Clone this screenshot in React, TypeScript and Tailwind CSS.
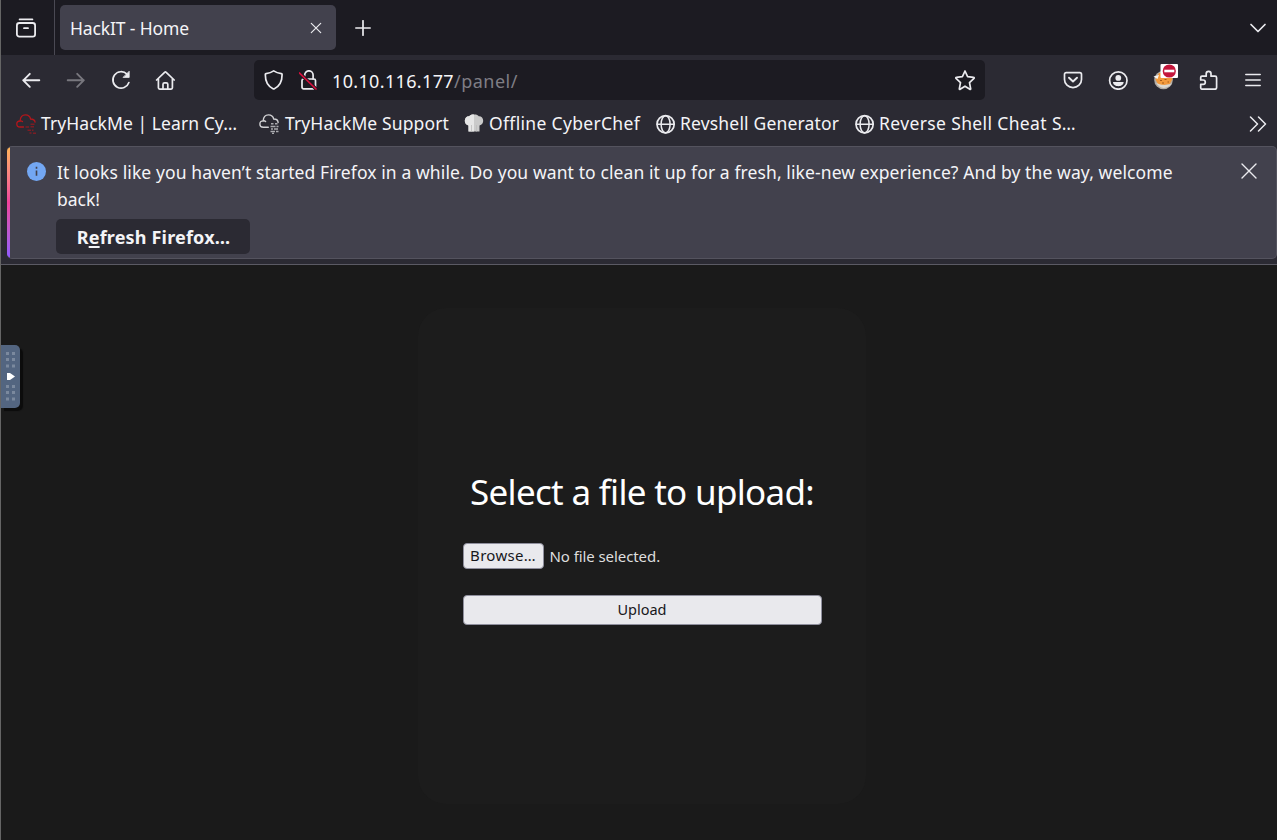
import type { ReactNode } from 'react';

const ink = '#ebebef';

function Icon({ className, children, box = '0 0 20 20' }: { className: string; children: ReactNode; box?: string }) {
  return (
    <svg viewBox={box} fill="none" stroke={ink} strokeWidth="1.5" strokeLinecap="round" strokeLinejoin="round" className={`block shrink-0 ${className}`}>
      {children}
    </svg>
  );
}

function Globe() {
  return (
    <Icon className="mr-1 size-5">
      <circle cx="9.600" cy="10.300" r="8.600" strokeWidth="1.700" />
      <ellipse cx="9.600" cy="10.300" rx="4.500" ry="8.600" strokeWidth="1.500" />
      <path d="M1.200 10.300H18" strokeWidth="1.500" />
    </Icon>
  );
}

function RedCloud() {
  return (
    <Icon className="mr-[5px] size-5">
      <g stroke="#b3161b" strokeWidth="1.300">
        <path d="M7.500 13H4C2 13 .8 11.700.8 10c0-1.800 1.400-3 3.300-3C4.300 3.500 6.300.9 9.500.9c2.800 0 4.500 1.600 5.100 4.100 2.500 0 4.200 1.300 4.500 3.200" />
        <path d="M4.100 7c.9-.2 1.700 0 2.400.6" />
      </g>
      <g stroke="#b3161b" strokeWidth="1.400" strokeLinecap="butt" opacity=".6">
        <path d="M14.500 10.300h4M9.500 13h3.500M14.500 12.800H18M11.500 16.200h3.500M16 16.200h1.500M13.500 19h2M17 19.200h3" />
      </g>
    </Icon>
  );
}

function GrayCloud() {
  return (
    <Icon className="mr-[6px] -ml-px size-5">
      <path d="M9.300 13.200H4.300C2.200 13.200.9 11.800.9 10c0-1.800 1.400-3.100 3.300-3.100C4.400 3.300 6.500.9 9.500.9c2.800 0 4.600 1.600 5.200 4.100 2.500 0 4.400 1.400 4.400 3.600" stroke="#d2d2d5" strokeWidth="1.400" />
      <path d="M4.200 6.900c.9-.2 1.700 0 2.400.6" stroke="#d2d2d5" strokeWidth="1.400" />
      <g stroke="#aaaaaf" strokeWidth="1.500" strokeLinecap="butt">
        <path d="M12 9.800h2.500M16 9.800h2.500M11.500 12.400h5M17.500 12.400H19.500M12 15h2M15 15h4M11.500 17.400h4.500M17 17.600h2.500M13 19.400h2" />
      </g>
    </Icon>
  );
}

function ChefHat() {
  return (
    <svg viewBox="0 0 20 20" className="mr-[5px] -ml-px block size-5 shrink-0">
      <path d="M4.500 17.500V11.500C2 11 .8 9 .8 6.800.8 4 2.800 2 5.200 2.200 6.300.8 8 .3 10 .5c2-.2 3.700.3 4.800 1.700 2.500-.2 4.400 1.800 4.400 4.600 0 2.200-1.200 4.200-3.700 4.700v6Z" fill="#cacaca" />
      <path d="M4.500 17.500V11.500C2 11 .8 9 .8 6.800.8 4 2.800 2 5.200 2.200 6.300.8 8 .3 10 .5V17.500Z" fill="#e6e6e6" />
      <path d="M7.500 17.500V11M12.500 17.500V11" stroke="#bdbdbd" strokeWidth=".8" />
    </svg>
  );
}

function CookieBadge() {
  return (
    <svg viewBox="0 0 26 26" className="block h-[26px] w-[26px] shrink-0">
      <circle cx="10.500" cy="16" r="9.300" fill="#b3ada6" />
      <path d="M2.500 15.500 6 9l12 0 1.500 6-3 5.500-11 1Z" fill="#f39a3c" />
      <path d="M3 18.500c3 2.500 10 3.500 15.500 1-3.500 6-12.500 6-15.500-1Z" fill="#dcd8d0" />
      <path d="m.5 12.500 5.500-1.500-1.500 4Z" fill="#f6f6f6" />
      <path d="M7 16.500h2M11.500 15.500h2M9 19h2M14.500 18H16" stroke="#a65a17" strokeWidth="1.200" />
      <rect x="7.500" y="0" width="17.500" height="14" rx="1" fill="#fff" />
      <circle cx="16.300" cy="7" r="6.600" fill="#c4163c" />
      <path d="M11.300 7h10" stroke="#fff" strokeWidth="2.600" />
    </svg>
  );
}

function Tabs() {
  return (
    <div className="flex h-[55px] shrink-0 items-center bg-[#1c1b22]">
      <div className="flex h-full w-[54px] items-center border-r border-[#4a4953] pl-[15px]">
        <Icon className="size-5">
          <rect x=".9" y="5" width="18.200" height="13.600" rx="2.400" strokeWidth="1.800" />
          <path d="M3.600 1.400h12.800" strokeWidth="1.800" />
          <path d="M8 10.200h4" strokeWidth="1.800" />
        </Icon>
      </div>
      <div className="ml-[5px] flex h-[45px] w-[276px] items-center justify-between rounded-[5px] bg-[#42414d] pr-[14px] pl-[10px]">
        <span className="pt-[2px] text-[17.5px] tracking-[-0.13px]">HackIT - Home</span>
        <Icon className="size-3" box="0 0 12 12"><path d="m1.300 1.300 9.400 9.400M10.700 1.300 1.300 10.700" strokeWidth="1.200" /></Icon>
      </div>
      <Icon className="ml-[19px] size-4" box="0 0 16 16"><path d="M8 .8v14.400M.8 8h14.400" strokeWidth="1.700" /></Icon>
      <Icon className="mr-[10px] ml-auto h-[10px] w-[18px]" box="0 0 18 10"><path d="m2 1.500 7 7 7-7" strokeWidth="1.700" /></Icon>
    </div>
  );
}

function Toolbar() {
  return (
    <div className="flex h-[50px] shrink-0 items-center pl-5">
      <Icon className="size-5"><path d="M18.300 10.300H2.200M8.800 3.800 2.300 10.300 8.800 16.800" strokeWidth="1.900" /></Icon>
      <Icon className="ml-[25px] size-5 opacity-40"><path d="M1.700 10.300H17.800M11.200 3.800l6.500 6.500-6.500 6.500" strokeWidth="1.900" /></Icon>
      <Icon className="ml-[25px] size-5">
        <path d="M17.900 12.500A8.200 8.200 0 1 1 16 4.200" strokeWidth="1.700" />
        <path d="M18.200 1.600v5.800h-5.800Z" fill={ink} strokeWidth=".8" />
      </Icon>
      <Icon className="ml-[24px] size-5">
        <path d="M1.600 10 9.600 2.300q.8-.7 1.600 0l8 7.700M3.400 8.600v9.200q0 1.300 1.300 1.300h11.400q1.300 0 1.300-1.300V8.600" strokeWidth="1.700" />
        <path d="M8 18.500V14.300q0-1.500 1.500-1.500h1.800q1.500 0 1.500 1.500v4.200" strokeWidth="1.700" />
      </Icon>
      <div className="ml-[79px] flex h-10 w-[731px] items-center rounded-[5px] bg-[#1c1b22] pr-[9px] pl-[10px]">
        <Icon className="size-5">
          <path d="M9.700.9c2.300 1.600 4.800 2.400 7.600 2.800.5.100.8.400.8.900 0 6.800-1.800 11.400-7.700 14.100q-.7.300-1.400 0C3.100 16 1.300 11.400 1.300 4.600c0-.5.300-.8.800-.9C4.900 3.300 7.400 2.500 9.700.9Z" strokeWidth="1.700" />
        </Icon>
        <Icon className="ml-[15px] size-5">
          <rect x="3" y="9" width="13.500" height="9.800" rx="1.600" strokeWidth="1.700" />
          <path d="M5.700 6V5a4.200 4.200 0 0 1 8.400 0v4" strokeWidth="1.700" />
          <path d="m.5 3 16.500 16" stroke="#1c1b22" strokeWidth="3.500" />
          <path d="m.5 3 16.500 16" stroke="#d60f3c" strokeWidth="1.700" />
        </Icon>
        <span className="ml-[13px] pt-[2px] text-[18px] tracking-[0.35px] whitespace-pre">10.10.116.177</span>
        <span className="pt-[2px] text-[18px] tracking-[0.5px] text-[#7f7e85]">/panel/</span>
        <Icon className="ml-auto size-[22px]" box="0 0 22 22">
          <path d="m11 2 2.600 5.700 6.100.7c.5 0 .7.600.3 1l-4.500 4.200 1.200 6.200c.1.500-.4.800-.8.500L11 17.200l-4.900 3.100c-.4.300-.9 0-.8-.5l1.200-6.200L2 9.400c-.4-.4-.2-1 .3-1l6.100-.7Z" strokeWidth="1.700" />
        </Icon>
      </div>
      <Icon className="ml-[78px] size-5">
        <path d="M3.200 2.700h13.600c1 0 1.700.7 1.700 1.700v5a8.500 8.200 0 0 1-17 0v-5c0-1 .7-1.700 1.700-1.700Z" strokeWidth="1.700" />
        <path d="M6 7.700 10 11.500l4-3.800" strokeWidth="1.900" />
      </Icon>
      <Icon className="ml-[25px] size-5">
        <circle cx="10.300" cy="10.500" r="8.700" strokeWidth="1.700" />
        <circle cx="10.300" cy="7.900" r="2.900" fill={ink} stroke="none" />
        <path d="M5 12h10.600c0 2.500-2.400 4.200-5.300 4.200S5 14.500 5 12Z" fill={ink} stroke="none" />
      </Icon>
      <div className="mt-[-7px] ml-[25px]"><CookieBadge /></div>
      <Icon className="ml-[20px] size-5">
        <path d="M3 6.200h4.200V3.800a2.400 2.400 0 0 1 4.800 0v2.400h4c1 0 1.600.6 1.600 1.600v9.800c0 1-.6 1.600-1.600 1.600H3.200c-.9 0-1.500-.6-1.500-1.500V14.400h2.400a2.200 2.200 0 0 0 0-4.400H1.700V7.500c0-.8.500-1.300 1.300-1.300Z" strokeWidth="1.700" />
      </Icon>
      <Icon className="ml-[26px] h-[14px] w-4" box="0 0 16 14"><path d="M.8 1.500h14.400M.8 7h14.400M.8 12.500h14.400" /></Icon>
    </div>
  );
}

function Bookmarks() {
  return (
    <div className="flex h-[37px] shrink-0 items-center pl-[15px] text-[17.5px] whitespace-nowrap">
      <div className="flex w-[244px] items-center"><RedCloud /><span className="tracking-[0.07px]">TryHackMe | Learn Cy…</span></div>
      <div className="flex w-[205px] items-center"><GrayCloud /><span className="tracking-[0.12px]">TryHackMe Support</span></div>
      <div className="flex w-[191px] items-center"><ChefHat /><span className="tracking-[0.32px]">Offline CyberChef</span></div>
      <div className="flex w-[199px] items-center"><Globe /><span className="tracking-[0.17px]">Revshell Generator</span></div>
      <div className="flex items-center"><Globe /><span className="tracking-[0.37px]">Reverse Shell Cheat S…</span></div>
      <Icon className="mr-[10px] ml-auto h-4 w-[18px]" box="0 0 18 16"><path d="m1.500 1 7 7-7 7M9.500 1l7 7-7 7" /></Icon>
    </div>
  );
}

function Notice() {
  return (
    <div className="ml-[6px] flex h-[113px] shrink-0 overflow-hidden rounded-[5px] border border-[#54535e] border-l-0 bg-[#42414d]">
      <div className="w-[3px] shrink-0 bg-gradient-to-b from-[#ffb454] via-[#f0419b] to-[#9059ff]" />
      <svg viewBox="0 0 20 20" className="mt-[15px] ml-[17px] block size-[19px] shrink-0">
        <circle cx="10" cy="10" r="10" fill="#73a7f3" />
        <path d="M10 9v5.500M10 5v2" stroke="#42414d" strokeWidth="1.700" />
      </svg>
      <div className="ml-[10px] flex w-[1150px] flex-col items-start text-[17.5px] leading-[27px]">
        <p className="mt-3 ml-px whitespace-nowrap">
          <span className="tracking-[0.1px]">It looks like you haven’t started Firefox in a while. Do you want to clean it up for a fresh, like-new experience? And by the way, welcome</span>
          <br />back!
        </p>
        <button className="mt-[6px] flex h-[35px] w-[194px] items-center justify-center rounded-[5px] bg-[#2b2a33] pt-[2px] pl-px text-[18px] font-bold tracking-[0.18px]">
          <span>R<span className="underline decoration-2 underline-offset-[2px]">e</span>fresh Firefox…</span>
        </button>
      </div>
      <Icon className="mt-4 ml-[35px] size-4" box="0 0 16 16"><path d="m1 1 14 14M15 1 1 15" strokeWidth="1.400" /></Icon>
    </div>
  );
}

function SideHandle() {
  return (
    <div className="absolute top-[345px] left-0 flex h-[63px] w-[19px] items-center rounded-r-[5px] bg-[#536580] shadow-[3px_3px_1px_#0c0c0c]">
      <svg viewBox="0 0 19 63" className="h-[63px] w-[19px]">
        {[7, 13, 19.5, 40, 46, 52.5].map((y) => (
          <g key={y} fill="#7b899e"><rect x="5" y={y} width="3" height="3" /><rect x="11" y={y} width="3" height="3" /></g>
        ))}
        <path d="M6 28h3l5 3.500L9 35H6Z" fill="#fff" />
      </svg>
    </div>
  );
}

export default function App() {
  return (
    <div className="relative flex h-[840px] w-[1277px] flex-col overflow-hidden border-l border-[#656565] bg-[#2b2a33] font-['Noto_Sans',sans-serif] text-[#f4f4f7]">
      <Tabs />
      <Toolbar />
      <Bookmarks />
      <div className="flex h-[123px] shrink-0 flex-col border-b border-[#5b5a64] pt-1"><Notice /></div>
      <main className="flex flex-1 justify-center bg-[#1a1a1a] pt-[43px]">
        <section className="ml-[6px] flex h-[496px] w-[448px] flex-col items-center rounded-[28px] bg-[#1c1c1c] pt-[161px]">
          <h1 className="text-[35px] leading-[46px] tracking-[-0.7px] whitespace-nowrap text-white">Select a file to upload:</h1>
          <div className="mt-[28px] flex w-[359px] items-center text-[15px] leading-[22px]">
            <button className="h-[26px] w-[81px] rounded-[4px] border border-[#8f8f9d] bg-[#e9e9ed] pb-[2px] leading-none tracking-[0.3px] text-[#17171b]">Browse…</button>
            <span className="ml-[6px] pb-px tracking-[-0.08px] text-[#dedede]">No file selected.</span>
          </div>
          <button className="mt-[26px] h-[30px] w-[359px] rounded-[4px] border border-[#8f8f9d] bg-[#e9e9ed] pb-px text-[14.5px] leading-none text-[#17171b]">Upload</button>
        </section>
      </main>
      <SideHandle />
    </div>
  );
}
